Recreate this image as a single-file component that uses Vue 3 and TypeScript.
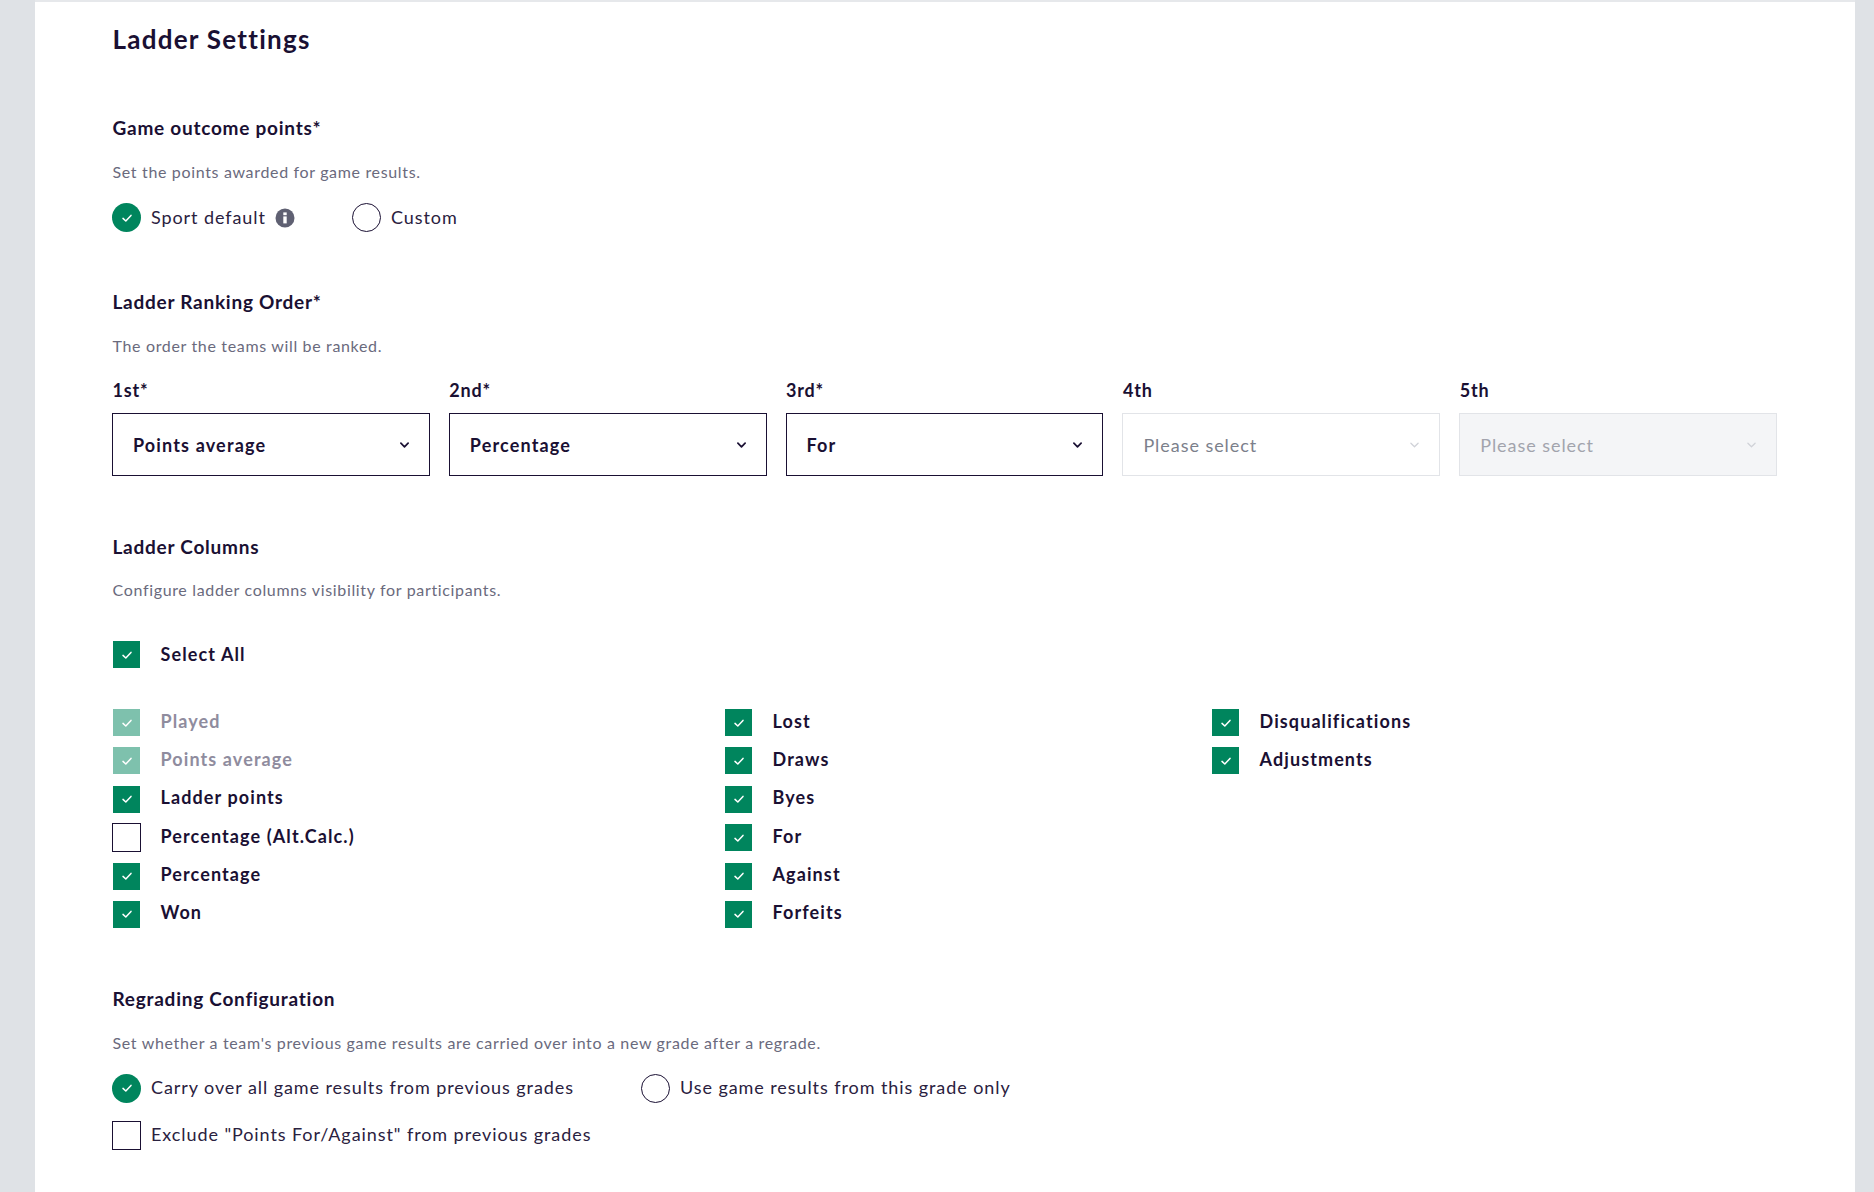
<script setup lang="ts">
interface Col { label: string; state: 'on' | 'off' | 'disabled' }
const ranks = [
  { label: '1st*', value: 'Points average', kind: 'filled' },
  { label: '2nd*', value: 'Percentage', kind: 'filled' },
  { label: '3rd*', value: 'For', kind: 'filled' },
  { label: '4th', value: 'Please select', kind: 'empty' },
  { label: '5th', value: 'Please select', kind: 'disabled' },
]
const columns: Col[][] = [
  [
    { label: 'Played', state: 'disabled' },
    { label: 'Points average', state: 'disabled' },
    { label: 'Ladder points', state: 'on' },
    { label: 'Percentage (Alt.Calc.)', state: 'off' },
    { label: 'Percentage', state: 'on' },
    { label: 'Won', state: 'on' },
  ],
  [
    { label: 'Lost', state: 'on' },
    { label: 'Draws', state: 'on' },
    { label: 'Byes', state: 'on' },
    { label: 'For', state: 'on' },
    { label: 'Against', state: 'on' },
    { label: 'Forfeits', state: 'on' },
  ],
  [
    { label: 'Disqualifications', state: 'on' },
    { label: 'Adjustments', state: 'on' },
  ],
]
</script>

<template>
  <div class="page">
    <main class="card">
      <h1 class="title">Ladder Settings</h1>

      <h2 class="heading first">Game outcome points*</h2>
      <p class="desc">Set the points awarded for game results.</p>
      <div class="radio-row">
        <label class="radio-item w-default">
          <span class="radio on">
            <svg viewBox="0 0 12 12" class="tick"><path d="M2 6.4 4.8 9 10 3.4" /></svg>
          </span>
          <span class="radio-text">Sport default</span>
          <svg class="info" viewBox="0 0 20 20">
            <circle cx="10" cy="10" r="9.5" fill="#5f6072" />
            <rect x="8.3" y="8.4" width="3.4" height="7" fill="#fff" />
            <rect x="8.3" y="4.4" width="3.4" height="2.8" fill="#fff" />
          </svg>
        </label>
        <label class="radio-item">
          <span class="radio"></span>
          <span class="radio-text">Custom</span>
        </label>
      </div>

      <h2 class="heading">Ladder Ranking Order*</h2>
      <p class="desc">The order the teams will be ranked.</p>
      <div class="ranks">
        <div v-for="r in ranks" :key="r.label" class="rank">
          <div class="rank-label">{{ r.label }}</div>
          <div class="select" :class="r.kind">
            <span>{{ r.value }}</span>
            <svg class="chev" viewBox="0 0 10 6"><path d="M1 1 5 5 9 1" /></svg>
          </div>
        </div>
      </div>

      <h2 class="heading columns-heading">Ladder Columns</h2>
      <p class="desc tight">Configure ladder columns visibility for participants.</p>
      <div class="check select-all">
        <span class="box on">
          <svg viewBox="0 0 12 12" class="tick"><path d="M2 6.4 4.8 9 10 3.4" /></svg>
        </span>
        <span class="check-text">Select All</span>
      </div>
      <div class="columns">
        <div v-for="(col, i) in columns" :key="i" class="column">
          <div v-for="c in col" :key="c.label" class="check" :class="{ dim: c.state === 'disabled' }">
            <span class="box" :class="{ on: c.state !== 'off', off: c.state === 'off' }">
              <svg v-if="c.state !== 'off'" viewBox="0 0 12 12" class="tick"><path d="M2 6.4 4.8 9 10 3.4" /></svg>
            </span>
            <span class="check-text">{{ c.label }}</span>
          </div>
        </div>
      </div>

      <h2 class="heading regrade-heading">Regrading Configuration</h2>
      <p class="desc">Set whether a team's previous game results are carried over into a new grade after a regrade.</p>
      <div class="radio-row">
        <label class="radio-item w-carry">
          <span class="radio on">
            <svg viewBox="0 0 12 12" class="tick"><path d="M2 6.4 4.8 9 10 3.4" /></svg>
          </span>
          <span class="radio-text">Carry over all game results from previous grades</span>
        </label>
        <label class="radio-item">
          <span class="radio"></span>
          <span class="radio-text">Use game results from this grade only</span>
        </label>
      </div>
      <label class="radio-item exclude">
        <span class="square"></span>
        <span class="radio-text">Exclude "Points For/Against" from previous grades</span>
      </label>
    </main>
  </div>
</template>

<style>
html, body { margin: 0; padding: 0; background: #dfe2e6; }
</style>

<style scoped>
.page {
  height: 1192px;
  overflow: hidden;
  background: #dfe2e6;
  padding: 0 19px 0 35px;
  font-family: Lato, "Liberation Sans", sans-serif;
  color: #1a1033;
}
.card {
  height: 100%;
  box-sizing: border-box;
  background: #fff;
  border-top: 2px solid #e6e8eb;
  padding: 21px 78px 0 77px;
}
.title {
  margin: 0;
  padding-left: 0.5px;
  font-size: 26px;
  line-height: 32px;
  font-weight: 700;
  letter-spacing: 1.25px;
}
.heading {
  margin: 58px 0 0;
  padding-left: 0.5px;
  font-size: 19px;
  line-height: 24px;
  font-weight: 700;
  letter-spacing: 0.75px;
}
.heading.first { margin-top: 61px; }
.columns-heading { margin-top: 59px; }
.regrade-heading { margin-top: 59px; }
.desc {
  margin: 22px 0 0;
  padding-left: 0.5px;
  font-size: 16px;
  line-height: 20px;
  color: #6a6a7d;
  letter-spacing: 0.66px;
}
.desc.tight { margin-top: 21px; }
.radio-row {
  display: flex;
  margin-top: 21px;
}
.radio-item {
  display: flex;
  align-items: center;
  font-size: 18px;
  letter-spacing: 0.92px;
  color: #2a2140;
}
.radio-text { padding-bottom: 2px; }
.w-default { width: 240px; }
.w-carry { width: 529px; }
.radio {
  width: 29px;
  height: 29px;
  box-sizing: border-box;
  border: 1.25px solid #1a1033;
  border-radius: 50%;
  display: flex;
  align-items: center;
  justify-content: center;
  margin-right: 10px;
  flex: none;
}
.radio.on { background: #00855d; border: none; }
.info { width: 20px; height: 20px; margin-left: 9px; }
.tick {
  width: 12px;
  height: 12px;
  fill: none;
  stroke: #fff;
  stroke-width: 1.5;
  stroke-linecap: round;
  stroke-linejoin: round;
}
.ranks {
  display: grid;
  grid-template-columns: repeat(5, 1fr);
  gap: 19px;
  margin-top: 22px;
}
.rank-label {
  padding-left: 0.5px;
  font-size: 18px;
  line-height: 24px;
  font-weight: 700;
  letter-spacing: 0.8px;
}
.select {
  margin-top: 11px;
  height: 63px;
  box-sizing: border-box;
  border: 1px solid #1a1033;
  padding: 0 20px 0 20px;
  display: flex;
  align-items: center;
  justify-content: space-between;
  font-size: 18px;
  font-weight: 700;
  letter-spacing: 1.15px;
}
.select.empty, .select.disabled {
  border-color: #e2e4e8;
  font-weight: 400;
  color: #7c7f8b;
  letter-spacing: 0.95px;
}
.select.disabled { background: #f4f5f7; color: #a2a4ad; }
.chev {
  width: 9px;
  height: 6px;
  fill: none;
  stroke: currentColor;
  stroke-width: 1.9;
  stroke-linecap: round;
  stroke-linejoin: round;
}
.select.empty .chev, .select.disabled .chev { stroke: #d0d2d8; stroke-width: 1.4; }
.check {
  display: flex;
  align-items: center;
  font-size: 18px;
  font-weight: 700;
  letter-spacing: 1.1px;
  height: 27px;
}
.check-text { padding-bottom: 2px; }
.column .check-text { padding-bottom: 4px; }
.select-all { margin-top: 41px; }
.box {
  width: 27px;
  height: 27px;
  box-sizing: border-box;
  margin-right: 20.5px;
  margin-left: 1px;
  display: flex;
  align-items: center;
  justify-content: center;
  flex: none;
}
.box.on { background: #00855d; }
.box.off { border: 1px solid #1a1033; width: 29px; margin-left: 0; margin-right: 19.5px; height: 29px; }
.dim .box { opacity: 0.5; }
.dim .check-text { color: #8f8c9e; }
.columns {
  display: grid;
  grid-template-columns: 612px 487px 1fr;
  margin-top: 41px;
}
.column {
  display: flex;
  flex-direction: column;
  gap: 11.4px;
}
.exclude { margin-top: 18px; }
.square {
  width: 29px;
  height: 29px;
  box-sizing: border-box;
  border: 1px solid #1a1033;
  margin-right: 10px;
  flex: none;
}
</style>
